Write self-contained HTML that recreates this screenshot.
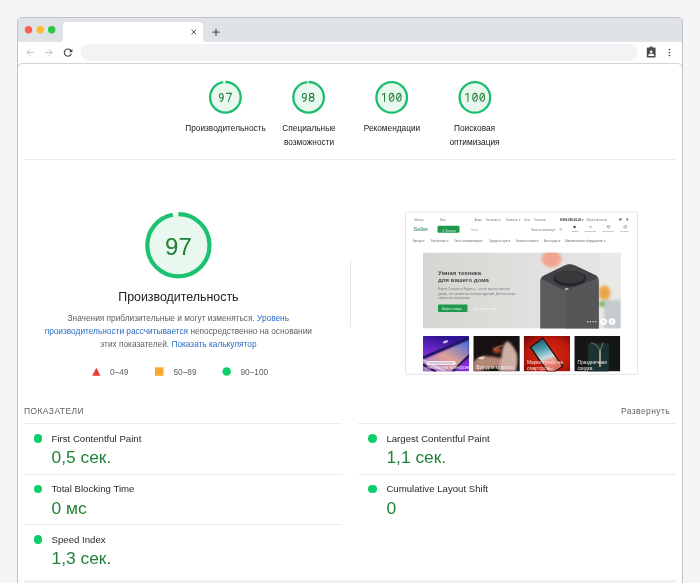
<!DOCTYPE html>
<html><head><meta charset="utf-8">
<style>
*{margin:0;padding:0;box-sizing:border-box}
html,body{width:700px;height:583px;overflow:hidden;background:#f5f5f5;font-family:"Liberation Sans",sans-serif;color:#212121}
.a{position:absolute}
.lbl{position:absolute;font-size:8.3px;line-height:14px;color:#212121;text-align:center;width:90px}
.num{position:absolute;font-family:"Liberation Mono",monospace;color:#0a8a2a;text-align:center}
.div{position:absolute;background:#ebebeb;height:1px}
.desc{position:absolute;font-size:8.3px;line-height:13.4px;color:#5f5f5f;text-align:center;width:300px}
.desc b{font-weight:normal;color:#2a6cc6}
.leg{position:absolute;font-size:8.3px;line-height:10px;color:#616161}
.mt{position:absolute;font-size:9.65px;line-height:12px;color:#2a2a2a}
.mv{position:absolute;font-size:17.4px;line-height:20px;color:#1f8237}
.t{position:absolute;font-size:2.6px;line-height:1;white-space:nowrap;color:#777}
.mdot{position:absolute;width:8.5px;height:8.5px;border-radius:50%;background:#0cce6b}
</style></head><body><div id="root" style="position:absolute;left:0;top:0;width:700px;height:583px;will-change:transform">
<div id="win"></div>
<svg class="a" style="left:0;top:0" width="700" height="583">
  <!-- tab bar -->
  <path d="M17.5,583 V21 a3.5,3.5 0 0 1 3.5,-3.5 H679 a3.5,3.5 0 0 1 3.5,3.5 V583" fill="#fff" stroke="#c2c2c2" stroke-width="1"/>
  <path d="M18,21.2 a3.2,3.2 0 0 1 3.2,-3.2 H678.8 a3.2,3.2 0 0 1 3.2,3.2 V42 H18 Z" fill="#dfe2e7"/>
  <path d="M59,42.2 a4,4 0 0 0 4,-4 V26 a4,4 0 0 1 4,-4 H199 a4,4 0 0 1 4,4 V38.2 a4,4 0 0 0 4,4 Z" fill="#fff"/>
  <circle cx="28.5" cy="29.7" r="3.7" fill="#fd5d56"/>
  <circle cx="40.2" cy="29.7" r="3.7" fill="#fdbb2d"/>
  <circle cx="51.7" cy="29.7" r="3.7" fill="#28c840"/>
  <path d="M191.6,29.8 L196,34.2 M196,29.8 L191.6,34.2" stroke="#444" stroke-width="1.0"/>
  <path d="M212.5,32.2 H219.5 M216,28.7 V35.7" stroke="#555" stroke-width="1.25"/>
  <!-- toolbar -->
  <rect x="80.5" y="44" width="557" height="17" rx="8.5" fill="#f1f3f4"/>
  <path d="M18,67.5 Q18.5,63.5 22,63.5 H678 Q681.5,63.5 682,67.5" fill="none" stroke="#d4d4d4" stroke-width="1"/>
  <path d="M33.8,52.4 H27 M30.2,49.2 L27,52.4 L30.2,55.6" fill="none" stroke="#bdbdbd" stroke-width="1"/>
  <path d="M45.2,52.4 H52 M48.8,49.2 L52,52.4 L48.8,55.6" fill="none" stroke="#bdbdbd" stroke-width="1"/>
  <path d="M71.2,51.2 A3.6,3.6 0 1 0 71.3,53.8" fill="none" stroke="#4a4a4a" stroke-width="1.2"/>
  <path d="M72.4,48.8 V52.2 H69 Z" fill="#4a4a4a"/>
  <rect x="646.8" y="47.6" width="8.8" height="10" rx="0.8" fill="#4c4c4c"/>
  <rect x="649.8" y="46.6" width="2.8" height="2" rx="0.6" fill="#4c4c4c"/>
  <circle cx="651.2" cy="51.8" r="1.35" fill="#fff"/>
  <path d="M648.3,56 V55.3 C648.3,54.2 649.8,53.8 651.2,53.8 C652.6,53.8 654.1,54.2 654.1,55.3 V56 Z" fill="#fff"/>
  <circle cx="669.4" cy="49.5" r="0.85" fill="#444"/>
  <circle cx="669.4" cy="52.5" r="0.85" fill="#444"/>
  <circle cx="669.4" cy="55.5" r="0.85" fill="#444"/>
</svg>

<!-- top gauges -->
<svg class="a" style="left:0;top:0" width="700" height="583">
  <g fill="#e8f8ef" stroke="#1cbd6f" stroke-width="2.3">
    <circle cx="225.4" cy="97.3" r="15.3" stroke-dasharray="93.2 100" transform="rotate(-90 225.4 97.3)"/>
    <circle cx="308.6" cy="97.3" r="15.3" stroke-dasharray="94.2 100" transform="rotate(-90 308.6 97.3)"/>
    <circle cx="391.7" cy="97.4" r="15.3"/>
    <circle cx="474.9" cy="97.4" r="15.3"/>
  </g>
  <path fill="none" stroke="#24803d" stroke-width="1.05" d="M219.40,95.80a1.90,2.40 0 1,0 3.80,0a1.90,2.40 0 1,0 -3.80,0M223.20,95.80V97.40C223.20,100.20 222.05,101.30 219.65,101.30M226.15,93.35H231.45L228.05,101.80M302.45,95.80a1.90,2.40 0 1,0 3.80,0a1.90,2.40 0 1,0 -3.80,0M306.25,95.80V97.40C306.25,100.20 305.10,101.30 302.70,101.30M309.50,95.20a2.15,1.85 0 1,0 4.30,0a2.15,1.85 0 1,0 -4.30,0M309.25,99.35a2.40,2.00 0 1,0 4.80,0a2.40,2.00 0 1,0 -4.80,0M381.85,94.90L384.55,93.30V101.80M389.30,97.30a2.30,3.90 0 1,0 4.60,0a2.30,3.90 0 1,0 -4.60,0M390.35,99.20L392.85,95.40M396.50,97.30a2.30,3.90 0 1,0 4.60,0a2.30,3.90 0 1,0 -4.60,0M397.55,99.20L400.05,95.40M465.25,94.90L467.95,93.30V101.80M472.70,97.30a2.30,3.90 0 1,0 4.60,0a2.30,3.90 0 1,0 -4.60,0M473.75,99.20L476.25,95.40M479.90,97.30a2.30,3.90 0 1,0 4.60,0a2.30,3.90 0 1,0 -4.60,0M480.95,99.20L483.45,95.40"/>
  <circle cx="178.4" cy="245.3" r="31.1" fill="#e8f8ef" stroke="#1cc171" stroke-width="4.2" stroke-dasharray="189.5 300" transform="rotate(-90 178.4 245.3)"/>
</svg>

<div class="lbl" style="left:180.5px;top:121.4px">Производительность</div>
<div class="lbl" style="left:264px;top:121.4px">Специальные<br>возможности</div>
<div class="lbl" style="left:347px;top:121.4px">Рекомендации</div>
<div class="lbl" style="left:429.5px;top:121.4px">Поисковая<br>оптимизация</div>

<div class="div" style="left:24px;top:159px;width:652px"></div>

<div class="a" style="left:138.4px;top:232px;width:80px;text-align:center;font-size:24px;line-height:30px;color:#1f8237">97</div>
<div class="a" style="left:78.4px;top:290.0px;width:200px;text-align:center;font-size:12.4px;line-height:15px;color:#212121">Производительность</div>
<div class="desc" style="left:28.3px;top:311.5px">Значения приблизительные и могут изменяться. <b>Уровень</b><br><b>производительности рассчитывается</b> непосредственно на основании<br>этих показателей. <b>Показать калькулятор</b></div>

<svg class="a" style="left:0;top:0" width="700" height="583">
  <polygon points="92.2,375.8 100.5,375.8 96.35,367.8" fill="#eb3b34"/>
  <rect x="155" y="367.3" width="8.5" height="8.5" fill="#fca731"/>
  <circle cx="226.7" cy="371.5" r="4.25" fill="#0cce6b"/>
</svg>
<div class="leg" style="left:110px;top:366.6px">0–49</div>
<div class="leg" style="left:173.5px;top:366.6px">50–89</div>
<div class="leg" style="left:240.5px;top:366.6px">90–100</div>

<div class="a" style="left:350px;top:259.5px;width:1px;height:67px;background:#e6e6e6"></div>

<!-- thumbnail -->
<svg class="a" style="left:0;top:0" width="700" height="583">
  <defs>
    <filter id="b1" x="-50%" y="-50%" width="200%" height="200%"><feGaussianBlur stdDeviation="0.45"/></filter>
    <filter id="b2" x="-50%" y="-50%" width="200%" height="200%"><feGaussianBlur stdDeviation="1.5"/></filter>
    <filter id="b3" x="-50%" y="-50%" width="200%" height="200%"><feGaussianBlur stdDeviation="0.8"/></filter>
    <linearGradient id="hero" x1="0" y1="0" x2="1" y2="0">
      <stop offset="0" stop-color="#d6d5d2"/><stop offset="0.6" stop-color="#e2e1df"/><stop offset="1" stop-color="#e6e6e4"/>
    </linearGradient>
    <linearGradient id="c1" x1="0.3" y1="0" x2="0" y2="1">
      <stop offset="0" stop-color="#2e1492"/><stop offset="0.6" stop-color="#8a2ee6"/><stop offset="1" stop-color="#6a24b8"/>
    </linearGradient>
    <linearGradient id="c1b" x1="0" y1="1" x2="1" y2="0">
      <stop offset="0" stop-color="#b080d8"/><stop offset="0.5" stop-color="#e0a090"/><stop offset="1" stop-color="#3a6ae8"/>
    </linearGradient>
    <radialGradient id="c3" cx="0.55" cy="0.55" r="0.75">
      <stop offset="0" stop-color="#de2a10"/><stop offset="0.65" stop-color="#b8180c"/><stop offset="1" stop-color="#6a0806"/>
    </radialGradient>
    <linearGradient id="scr" x1="0" y1="0" x2="0.3" y2="1">
      <stop offset="0" stop-color="#154a5a"/><stop offset="0.35" stop-color="#4a9aa8"/><stop offset="0.62" stop-color="#c8dce0"/><stop offset="0.75" stop-color="#e88a78"/><stop offset="1" stop-color="#e07060"/>
    </linearGradient>
    <clipPath id="heroclip"><rect x="423" y="252.5" width="198" height="76" rx="0.5"/></clipPath>
    <clipPath id="cl1"><rect x="423" y="336" width="46.2" height="35.6" rx="0.8"/></clipPath>
    <clipPath id="cl2"><rect x="473.3" y="336" width="46.5" height="35.6" rx="0.8"/></clipPath>
    <clipPath id="cl3"><rect x="523.7" y="336" width="46.5" height="35.6" rx="0.8"/></clipPath>
    <clipPath id="cl4"><rect x="574.3" y="336" width="46" height="35.6" rx="0.8"/></clipPath>
  </defs>
  <rect x="405.5" y="212" width="232" height="162.3" rx="1.5" fill="#fff" stroke="#e6e6e6" stroke-width="1"/>
  <rect x="437.5" y="225.8" width="22" height="7" rx="1.2" fill="#1f9a4c"/>
  <rect x="619.2" y="218.2" width="2.4" height="2.4" rx="0.5" fill="#777" filter="url(#b1)"/>
  <rect x="626.4" y="218.2" width="1.6" height="2.4" fill="#777" filter="url(#b1)"/>
  <circle cx="560.8" cy="229.4" r="1.1" fill="none" stroke="#8a8a8a" stroke-width="0.5"/>
  <circle cx="574.6" cy="227" r="1.3" fill="#555" filter="url(#b1)"/>
  <path d="M589.5,228 L590.5,225.8 L591.5,228" stroke="#777" stroke-width="0.5" fill="none"/>
  <path d="M607.3,226 Q608.5,225 608.5,226.5 Q608.5,225 609.7,226 Q610,227.5 608.5,228.4 Q607,227.5 607.3,226Z" stroke="#666" stroke-width="0.5" fill="none"/>
  <path d="M623.8,225.8 H626.6 L626.2,228.2 H624.2 Z" stroke="#666" stroke-width="0.5" fill="none"/>
  <!-- hero -->
  <g clip-path="url(#heroclip)">
    <rect x="423" y="252.5" width="198" height="76" fill="url(#hero)"/>
    <rect x="600" y="252.5" width="21" height="76" fill="#e9e9e7"/>
    <ellipse cx="551.5" cy="259" rx="10" ry="8.5" fill="#f0a48e" filter="url(#b2)"/>
    <ellipse cx="604.5" cy="293" rx="6" ry="7.5" fill="#eca648" filter="url(#b2)"/>
    <ellipse cx="604" cy="304" rx="5.5" ry="3" fill="#7cae4a" filter="url(#b2)"/>
    <rect x="604" y="300" width="17" height="29" fill="#c4cacd" filter="url(#b2)"/>
    <path d="M540.2,329 V281 Q540.2,277.5 543,276 L565,265.2 Q569.5,263.3 574,265 L596,275.5 Q598.8,277 598.8,280.5 V329 Z" fill="#5c5c5e" filter="url(#b1)"/>
    <path d="M566,290 V329 H598.8 V280.5 Z" fill="#525355" opacity="0.6" filter="url(#b1)"/>
    <path d="M543,276.2 L565,265.4 Q569.5,263.5 574,265.2 L596,275.6 Q598.6,277.4 595.5,279.5 L570,289.2 Q566,290.6 562,289.2 L543.5,280 Q540.6,278.2 543,276.2 Z" fill="#434446" filter="url(#b1)"/>
    <ellipse cx="569.7" cy="278.6" rx="16.4" ry="7.8" fill="#262729" filter="url(#b1)"/>
    <ellipse cx="569.7" cy="277.2" rx="14.6" ry="6.2" fill="#38393b" filter="url(#b1)"/>
    <rect x="565" y="288.3" width="3.4" height="1.4" fill="#d4d4d4" filter="url(#b1)"/>
    <rect x="587" y="320.9" width="1.5" height="1.5" rx="0.75" fill="#ddd"/>
    <rect x="589.7" y="320.9" width="1.5" height="1.5" rx="0.75" fill="#ddd"/>
    <rect x="592.4" y="320.9" width="1.5" height="1.5" rx="0.75" fill="#ddd"/>
    <rect x="595.1" y="320.9" width="1.5" height="1.5" rx="0.75" fill="#ddd"/>
    <rect x="438" y="304.5" width="29.5" height="7.5" rx="1" fill="#1f9a4c"/>
    <circle cx="603.6" cy="321.6" r="3.3" fill="#fff"/>
    <circle cx="612.1" cy="321.6" r="3.3" fill="#fff"/>
    <path d="M604.3,320.4 L603.1,321.6 L604.3,322.8 M611.4,320.4 L612.6,321.6 L611.4,322.8" stroke="#555" stroke-width="0.5" fill="none"/>
  </g>
  <!-- cards -->
  <g clip-path="url(#cl1)">
    <rect x="423" y="336" width="46.2" height="35.4" fill="url(#c1)"/>
    <path d="M423,360 L469,339.5 L469,355 L452,371.4 L423,371.4 Z" fill="url(#c1b)" filter="url(#b3)"/>
    <path d="M423,357.8 L469,338" stroke="#1e1a5e" stroke-width="2.6" fill="none" filter="url(#b1)"/>
    <path d="M452.5,371.8 L469.5,355" stroke="#241c50" stroke-width="2.2" fill="none" filter="url(#b1)"/>
    <path d="M423,359.8 L446,371.8" stroke="#d8c8f0" stroke-width="2" fill="none" filter="url(#b1)" opacity="0.85"/><path d="M423,364.5 L436,371.8" stroke="#201850" stroke-width="2.2" fill="none" filter="url(#b1)"/>
    <ellipse cx="445.5" cy="341.7" rx="2.8" ry="1" fill="#f0f0ff" transform="rotate(-22 445.5 341.7)" filter="url(#b1)"/>
    <rect x="426.5" y="361" width="29.3" height="4" rx="2" fill="#f4eef8" opacity="0.92"/>
    <rect x="429" y="362.6" width="24" height="0.8" fill="#a8a0b8"/>
  </g>
  <g clip-path="url(#cl2)">
    <rect x="473.3" y="336" width="46.5" height="35.4" fill="#171211"/>
    <ellipse cx="497" cy="350" rx="4" ry="3" fill="#b04a20" filter="url(#b2)"/>
    <path d="M473.3,362 Q478,356.5 484,356 Q494,356 503,358.5 L503,367 Q490,366 480,371.4 L473.3,371.4 Z" fill="#b48676" filter="url(#b3)"/>
    <path d="M477,358.5 Q481,356 485,356.5 L483,359.5 Z" fill="#e8d0c8" filter="url(#b1)"/>
    <path d="M499,371.4 Q501,360 502,352 Q503,345 506,342 Q508,340.5 510,343 Q515,348 517,354 Q518,362 516,371.4 Z" fill="#cfaea6" filter="url(#b3)"/>
    <path d="M494,350 Q498,346 503,345.5" stroke="#a87060" stroke-width="1.2" fill="none" filter="url(#b1)"/>
  </g>
  <g clip-path="url(#cl3)">
    <rect x="523.7" y="336" width="46.5" height="35.4" fill="url(#c3)"/>
    <path d="M529.5,347 L543,337.3 L563.5,366.5 L549.5,375.5 Z" fill="#1a0e0e" filter="url(#b1)"/>
    <path d="M531.3,347.3 L542.8,339 L561.8,366.3 L550,374 Z" fill="url(#scr)" filter="url(#b1)"/>
  </g>
  <g clip-path="url(#cl4)">
    <rect x="574.3" y="336" width="46" height="35.4" fill="#161616"/>
    <rect x="587.8" y="343.3" width="21" height="28.5" fill="#1b3232" filter="url(#b1)"/>
    <path d="M591,342.8 Q596,343 600,350.5 Q602.5,345 603.2,342.3" stroke="#c0b08a" stroke-width="0.6" fill="none"/>
    <rect x="599.3" y="350.5" width="1.4" height="16.5" fill="#d6c9a4" filter="url(#b1)"/>
  </g>
</svg>


<div class="a" style="left:0;top:0;width:700px;height:583px;overflow:visible">
<div class="t" style="left:414.5px;top:219.6px">Москва</div>
<div class="t" style="left:440px;top:219.6px">Блог</div>
<div class="t" style="left:474.5px;top:219.6px">Акции</div>
<div class="t" style="left:486px;top:219.6px">Как купить ▾</div>
<div class="t" style="left:506px;top:219.6px">Компания ▾</div>
<div class="t" style="left:524.5px;top:219.6px">Блог</div>
<div class="t" style="left:534.5px;top:219.6px">Контакты</div>
<div class="t" style="left:560px;top:219.4px;font-weight:bold;color:#222;font-size:2.9px">8 800 000-00-00 ▾</div>
<div class="t" style="left:586px;top:219.6px">Обратный звонок</div>
<div class="t" style="left:413.5px;top:227.2px;font-size:5.6px;font-weight:bold;color:#5a9c82;letter-spacing:-0.1px">Seller</div>
<div class="t" style="left:442px;top:229.5px;color:#d8f0e0;font-size:2.8px">☰ Каталог</div>
<div class="t" style="left:471px;top:229.8px;color:#aaa">Поиск</div>
<div class="t" style="left:531px;top:229.8px">Поиск по магазину ▾</div>
<div class="t" style="left:572px;top:229.8px;font-size:2.3px">Войти</div>
<div class="t" style="left:584.5px;top:229.8px;font-size:2.3px">Сравнение</div>
<div class="t" style="left:602.5px;top:229.8px;font-size:2.3px">Избранное</div>
<div class="t" style="left:620px;top:229.8px;font-size:2.3px">Корзина</div>
<div class="t" style="left:413px;top:240.8px;color:#6a6a6a">Бренды ▾</div>
<div class="t" style="left:430.5px;top:240.8px;color:#6a6a6a">Электроника ▾</div>
<div class="t" style="left:454px;top:240.8px;color:#6a6a6a">Свет и электротовары ▾</div>
<div class="t" style="left:489px;top:240.8px;color:#6a6a6a">Одежда и обувь ▾</div>
<div class="t" style="left:516px;top:240.8px;color:#6a6a6a">Бытовая техника ▾</div>
<div class="t" style="left:544px;top:240.8px;color:#6a6a6a">Аксессуары ▾</div>
<div class="t" style="left:565px;top:240.8px;color:#6a6a6a">Шиномонтажное оборудование ▾</div>
<div class="t" style="left:438px;top:270.4px;font-size:6px;font-weight:bold;color:#484848">Умная техника</div>
<div class="t" style="left:438px;top:276.6px;font-size:6px;font-weight:bold;color:#484848">для вашего дома</div>
<div class="t" style="left:438px;top:287.4px;font-size:2.8px;color:#7a7a7a;line-height:4.45px;white-space:normal;width:82px">Яндекс.Станция от Яндекса — это не просто стильный дизайн, но и множество полезных функций. Для настоящих любителей электроники.</div>
<div class="t" style="left:442px;top:308.7px;font-size:2.6px;color:#e6f5ea">Выбрать товары</div>
<div class="t" style="left:473px;top:308.8px;font-size:2.6px;color:#f6f6f6">Подробнее о товаре</div>
<div class="a" style="left:423px;top:336px;width:46.2px;height:35.4px;overflow:hidden"><div class="t" style="left:3.5px;top:30.3px;font-size:4.8px;color:#f0e6f6">Чехлы на телефоны</div></div>
<div class="a" style="left:473.3px;top:336px;width:46.5px;height:35.4px;overflow:hidden"><div class="t" style="left:3.2px;top:30.3px;font-size:4.8px;color:#eee">Всё для красоты</div></div>
<div class="a" style="left:523.7px;top:336px;width:46.5px;height:35.4px;overflow:hidden"><div class="t" style="left:3.3px;top:24px;font-size:4.8px;color:#f8e0dc;line-height:6.2px;white-space:normal;width:44px">Маркетплейс на смартфоны</div></div>
<div class="a" style="left:574.3px;top:336px;width:46px;height:35.4px;overflow:hidden"><div class="t" style="left:3.2px;top:24px;font-size:4.8px;color:#e8e8e8;line-height:6.2px;white-space:normal;width:42px">Праздничная скидка</div></div>
</div>
<div class="a" style="left:24px;top:406px;font-size:8.5px;line-height:10px;letter-spacing:0.4px;color:#5f5f5f">ПОКАЗАТЕЛИ</div>
<div class="a" style="left:621px;top:406px;font-size:8.5px;line-height:10px;letter-spacing:0.4px;color:#5f5f5f">Развернуть</div>

<div class="div" style="left:24px;top:423px;width:318px"></div>
<div class="div" style="left:358px;top:423px;width:318px"></div>
<div class="div" style="left:24px;top:474px;width:318px"></div>
<div class="div" style="left:358px;top:474px;width:318px"></div>
<div class="div" style="left:24px;top:524px;width:318px"></div>
<div class="div" style="left:24px;top:580px;width:652px;height:3px;background:#f1f1f1"></div>

<div class="mdot" style="left:33.6px;top:434.2px"></div>
<div class="mt" style="left:51.5px;top:432.7px">First Contentful Paint</div>
<div class="mv" style="left:51.5px;top:447.0px">0,5 сек.</div>
<div class="mdot" style="left:33.6px;top:484.7px"></div>
<div class="mt" style="left:51.5px;top:483.1px">Total Blocking Time</div>
<div class="mv" style="left:51.5px;top:497.5px">0 мс</div>
<div class="mdot" style="left:33.6px;top:535.2px"></div>
<div class="mt" style="left:51.5px;top:533.5px">Speed Index</div>
<div class="mv" style="left:51.5px;top:547.6px">1,3 сек.</div>

<div class="mdot" style="left:368px;top:434.2px"></div>
<div class="mt" style="left:386.4px;top:432.7px">Largest Contentful Paint</div>
<div class="mv" style="left:386.4px;top:447.0px">1,1 сек.</div>
<div class="mdot" style="left:368px;top:484.7px"></div>
<div class="mt" style="left:386.4px;top:483.1px">Cumulative Layout Shift</div>
<div class="mv" style="left:386.4px;top:497.5px">0</div>

</div></body></html>
